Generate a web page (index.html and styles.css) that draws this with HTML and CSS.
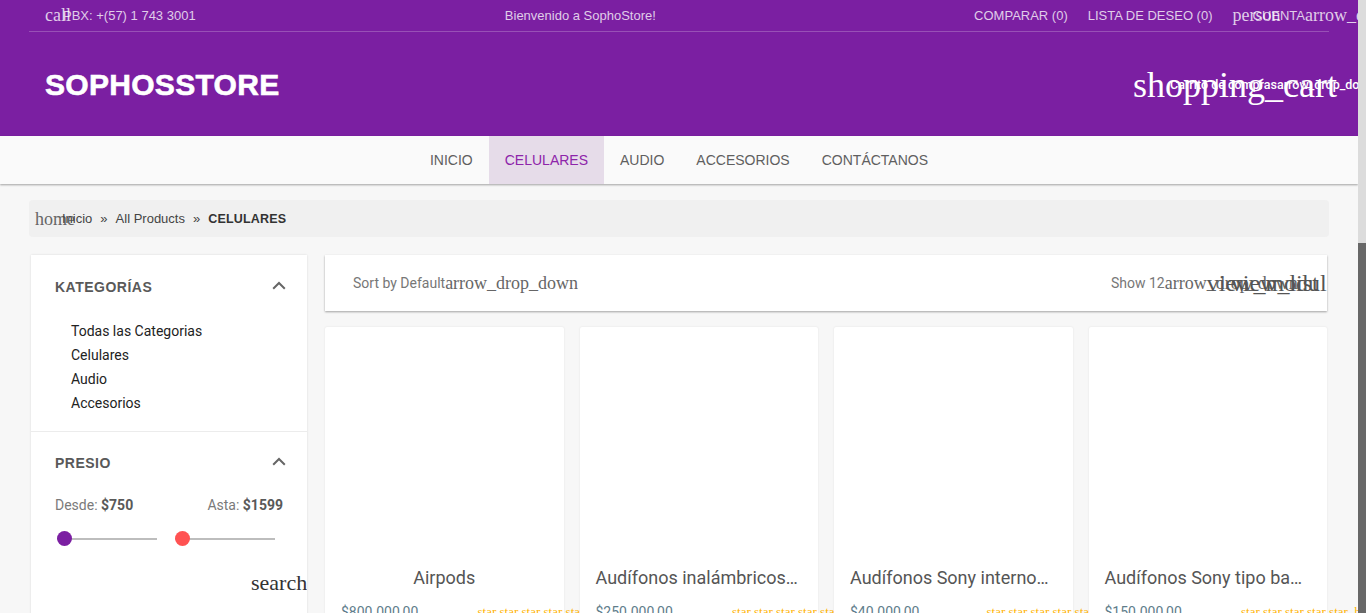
FILE: index.html
```html
<!DOCTYPE html>
<html lang="es">
<head>
<meta charset="utf-8">
<title>SophoStore - Celulares</title>
<link rel="stylesheet" href="styles.css">
</head>
<body>
<div class="page">
  <header class="header">
    <div class="container topbar">
      <div class="tb-left"><span class="mi mi-top">call</span><span>PBX: +(57) 1 743 3001</span></div>
      <div class="tb-mid">Bienvenido a SophoStore!</div>
      <div class="tb-right">
        <a class="tb-link">COMPARAR (0)</a>
        <a class="tb-link">LISTA DE DESEO (0)</a>
        <a class="tb-account"><span class="mi mi-top mi-person">person</span><span>CUENTA</span><span class="mi mi-top">arrow_drop_down</span></a>
      </div>
    </div>
    <div class="container mainbar">
      <div class="logo">SOPHOSSTORE</div>
      <div class="cart">
        <span class="mi mi-cart">shopping_cart</span>
        <span class="cart-label">Carrito de compras<span class="cart-arrow">arrow_drop_down</span></span>
      </div>
    </div>
  </header>

  <nav class="nav">
    <a class="nav-item">INICIO</a>
    <a class="nav-item active">CELULARES</a>
    <a class="nav-item">AUDIO</a>
    <a class="nav-item">ACCESORIOS</a>
    <a class="nav-item">CONTÁCTANOS</a>
  </nav>

  <div class="container content">
    <div class="breadcrumb">
      <span class="mi mi-home">home</span>
      <span class="bc-link">Inicio</span>
      <span class="bc-sep">»</span>
      <span class="bc-link">All Products</span>
      <span class="bc-sep">»</span>
      <span class="bc-current">CELULARES</span>
    </div>

    <div class="layout">
      <aside class="sidebar">
        <section class="side-section">
          <div class="side-head">
            <span class="side-title">KATEGORÍAS</span>
            <svg class="chev" width="14" height="9" viewBox="0 0 14 9"><path d="M1.2 7.8 L7 2 L12.8 7.8" fill="none" stroke="#666" stroke-width="2"/></svg>
          </div>
          <ul class="cat-list">
            <li>Todas las Categorias</li>
            <li>Celulares</li>
            <li>Audio</li>
            <li>Accesorios</li>
          </ul>
        </section>
        <section class="side-section price-section">
          <div class="side-head">
            <span class="side-title">PRESIO</span>
            <svg class="chev" width="14" height="9" viewBox="0 0 14 9"><path d="M1.2 7.8 L7 2 L12.8 7.8" fill="none" stroke="#666" stroke-width="2"/></svg>
          </div>
          <div class="price-labels">
            <span>Desde: <b>$750</b></span>
            <span>Asta: <b>$1599</b></span>
          </div>
          <div class="sliders">
            <div class="slider"><span class="knob knob-purple"></span></div>
            <div class="slider"><span class="knob knob-red"></span></div>
          </div>
          <div class="search-row"><span class="mi mi-search">search</span></div>
        </section>
      </aside>

      <main class="main">
        <div class="toolbar">
          <div class="sort">Sort by Default<span class="mi mi-tool">arrow_drop_down</span></div>
          <div class="tool-right">
            <span>Show 12</span><span class="mi mi-tool mi-show">arrow_drop_down</span>
            <span class="mi mi-view">view_module</span><span class="mi mi-view">view_list</span>
          </div>
        </div>

        <div class="products">
          <div class="card">
            <div class="card-img"></div>
            <div class="card-title">Airpods</div>
            <div class="card-foot"><span class="price">$800.000,00</span><span class="stars">star star star star star_half</span></div>
          </div>
          <div class="card">
            <div class="card-img"></div>
            <div class="card-title">Audífonos inalámbricos Sony WH-1000XM4</div>
            <div class="card-foot"><span class="price">$250.000,00</span><span class="stars">star star star star star_half</span></div>
          </div>
          <div class="card">
            <div class="card-img"></div>
            <div class="card-title">Audífonos Sony internos MDR-EX15</div>
            <div class="card-foot"><span class="price">$40.000,00</span><span class="stars">star star star star star_half</span></div>
          </div>
          <div class="card">
            <div class="card-img"></div>
            <div class="card-title">Audífonos Sony tipo banda WH-CH510</div>
            <div class="card-foot"><span class="price">$150.000,00</span><span class="stars">star star star star star_half</span></div>
          </div>
        </div>
      </main>
    </div>
  </div>
</div>
<div class="fake-scroll"><div class="fake-thumb"></div></div>
</body>
</html>
```

FILE: styles.css
```css
* { box-sizing: border-box; }
html, body { margin: 0; padding: 0; height: 100%; overflow: hidden; }
body {
  font-family: Roboto, "Liberation Sans", Arial, sans-serif;
  background: #f7f7f7;
  color: #333;
}
a { text-decoration: none; color: inherit; }
.page { width: 1358px; }
.container { width: 1300px; margin: 0 auto; }

/* material icon fallback text (icon font not loaded) */
.mi {
  font-family: "Liberation Serif", "Times New Roman", serif;
  white-space: nowrap;
  display: inline-block;
  overflow: visible;
}

/* header */
.header { background: #7b1fa2; }
.topbar {
  height: 32px;
  display: flex;
  align-items: center;
  justify-content: space-between;
  padding: 0 6px 1px 16px;
  border-bottom: 1px solid rgba(255,255,255,0.22);
  font-family: "Liberation Sans", Arial, sans-serif;
  font-size: 13px;
  color: rgba(255,255,255,0.78);
  white-space: nowrap;
}
.tb-left, .tb-right, .tb-account { display: flex; align-items: center; }
.mi-top { font-size: 18px; width: 18px; line-height: 20px; }
.mi-person { margin-right: 2px; }
.tb-link { margin-right: 20px; }
.tb-mid { margin-left: -9px; }

.mainbar {
  height: 104px;
  display: flex;
  align-items: center;
  justify-content: space-between;
  padding: 2px 0 0 16px;
}
.logo {
  font-family: "Liberation Sans", Arial, sans-serif;
  font-weight: 700;
  font-size: 30px;
  color: #fff;
  letter-spacing: 0.3px;
  -webkit-text-stroke: 0.6px #fff;
}
.cart { display: flex; align-items: center; color: #fff; width: 196px; }
.mi-cart { font-size: 36px; width: 37px; line-height: 40px; color: #fff; }
.cart-label {
  width: 159px;
  white-space: nowrap;
  font-size: 12.5px;
  font-weight: 500;
  overflow: visible;
  margin-top: -2px;
}

/* nav */
.nav {
  height: 48px;
  background: #fafafa;
  display: flex;
  justify-content: center;
  box-shadow: 0 1px 2px rgba(0,0,0,0.35);
  position: relative;
}
.nav-item {
  padding: 0 16px;
  line-height: 48px;
  font-family: "Liberation Sans", Arial, sans-serif;
  font-size: 14px;
  color: #5f5f5f;
}
.nav-item.active { background: #e6dce9; color: #8e24aa; }

/* breadcrumb */
.content { padding: 16px 0 0; }
.breadcrumb {
  height: 37px;
  background: #f0f0f0;
  border-radius: 4px;
  display: flex;
  align-items: center;
  padding-left: 6px;
  font-family: "Liberation Sans", Arial, sans-serif;
  font-size: 13px;
  color: #444;
  white-space: nowrap;
}
.mi-home { font-size: 18px; width: 27px; color: #666; margin-top: 2px; }
.bc-sep { margin: 0 8px; color: #444; }
.bc-current { font-weight: 700; color: #333; font-size: 12.5px; letter-spacing: 0.2px; }

/* layout */
.layout {
  display: grid;
  grid-template-columns: 276px minmax(0, 1fr);
  gap: 18px;
  padding: 18px 2px 0;
}
.main { min-width: 0; }

/* sidebar */
.sidebar {
  background: #fff;
  box-shadow: 0 0 2px rgba(0,0,0,0.12);
  overflow: hidden;
  height: 400px;
}
.side-section { padding: 22px 21px 16px 24px; border-bottom: 1px solid #ececec; }
.side-head { display: flex; align-items: center; justify-content: space-between; height: 20px; }
.side-title {
  font-family: "Liberation Sans", Arial, sans-serif;
  font-weight: 700;
  font-size: 14px;
  letter-spacing: 0.5px;
  color: #595959;
}
.chev { margin-top: -4px; }
.cat-list { list-style: none; margin: 22px 0 0; padding: 0 0 0 16px; }
.cat-list li { font-size: 14px; line-height: 24px; color: #222; }

.price-section { padding-top: 21px; border-bottom: none; }
.price-labels {
  display: flex;
  justify-content: space-between;
  margin-top: 22px;
  font-size: 14px;
  line-height: 20px;
  color: #7a7a7a;
  padding-right: 3px;
}
.price-labels b { color: #595959; }
.sliders { display: flex; gap: 18px; padding-left: 2px; margin-top: 12px; height: 24px; align-items: center; }
.slider { width: 100px; height: 2px; background: #bdbdbd; position: relative; }
.knob { position: absolute; left: 0; top: -7px; width: 15px; height: 15px; border-radius: 50%; }
.knob-purple { background: #7b1fa2; }
.knob-red { background: #ff5252; }
.search-row { margin-top: 18px; padding-left: 196px; }
.mi-search { font-size: 22px; color: #333; line-height: 28px; }

/* main */
.toolbar {
  height: 56px;
  background: #fff;
  box-shadow: 0 1px 2px rgba(0,0,0,0.35);
  display: flex;
  align-items: center;
  justify-content: space-between;
  padding: 0 0 0 28px;
  font-size: 14px;
  color: #777;
  white-space: nowrap;
  overflow: hidden;
}
.mi-tool { font-size: 18px; color: #666; width: 18px; }
.sort { display: flex; align-items: center; }
.tool-right { display: flex; align-items: center; width: 216px; flex: none; }
.mi-show { margin-right: 24px; }
.mi-view { font-size: 24px; width: 24px; color: #555; }

.products {
  display: grid;
  grid-template-columns: repeat(4, minmax(0, 1fr));
  gap: 16px;
  margin-top: 16px;
}
.card {
  background: #fff;
  box-shadow: 0 0 2px rgba(0,0,0,0.1);
  border-radius: 2px;
  height: 320px;
  min-width: 0;
}
.card-img { height: 239px; }
.card-title {
  padding: 0 16px;
  font-size: 18px;
  line-height: 24px;
  color: #555;
  text-align: center;
  white-space: nowrap;
  overflow: hidden;
  text-overflow: ellipsis;
}
.card-foot {
  display: flex;
  justify-content: space-between;
  align-items: center;
  padding: 14px 0 0 16px;
  white-space: nowrap;
}
.price { font-size: 14px; color: #607d8b; }
.stars {
  font-family: "Liberation Serif", serif;
  font-size: 13px;
  color: #ffb300;
  width: 86px;
  flex: none;
  overflow: visible;
}

/* scrollbar drawing */
.fake-scroll {
  position: fixed;
  top: 0;
  right: 0;
  width: 8px;
  height: 100%;
  background: #dcdcdc;
}
.fake-thumb {
  position: absolute;
  top: 243px;
  left: 0;
  width: 8px;
  bottom: 0;
  background: #686868;
}
```
